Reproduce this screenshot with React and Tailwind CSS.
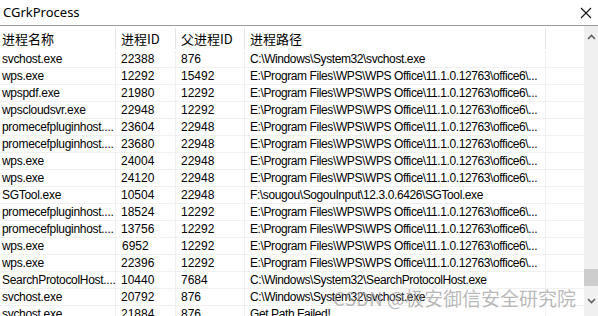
import React from 'react';

const rows = [
  ['svchost.exe', '22388', '876', 'C:\\Windows\\System32\\svchost.exe'],
  ['wps.exe', '12292', '15492', 'E:\\Program Files\\WPS\\WPS Office\\11.1.0.12763\\office6\\...'],
  ['wpspdf.exe', '21980', '12292', 'E:\\Program Files\\WPS\\WPS Office\\11.1.0.12763\\office6\\...'],
  ['wpscloudsvr.exe', '22948', '12292', 'E:\\Program Files\\WPS\\WPS Office\\11.1.0.12763\\office6\\...'],
  ['promecefpluginhost....', '23604', '22948', 'E:\\Program Files\\WPS\\WPS Office\\11.1.0.12763\\office6\\...'],
  ['promecefpluginhost....', '23680', '22948', 'E:\\Program Files\\WPS\\WPS Office\\11.1.0.12763\\office6\\...'],
  ['wps.exe', '24004', '22948', 'E:\\Program Files\\WPS\\WPS Office\\11.1.0.12763\\office6\\...'],
  ['wps.exe', '24120', '22948', 'E:\\Program Files\\WPS\\WPS Office\\11.1.0.12763\\office6\\...'],
  ['SGTool.exe', '10504', '22948', 'F:\\sougou\\SogouInput\\12.3.0.6426\\SGTool.exe'],
  ['promecefpluginhost....', '18524', '12292', 'E:\\Program Files\\WPS\\WPS Office\\11.1.0.12763\\office6\\...'],
  ['promecefpluginhost....', '13756', '12292', 'E:\\Program Files\\WPS\\WPS Office\\11.1.0.12763\\office6\\...'],
  ['wps.exe', '6952', '12292', 'E:\\Program Files\\WPS\\WPS Office\\11.1.0.12763\\office6\\...'],
  ['wps.exe', '22396', '12292', 'E:\\Program Files\\WPS\\WPS Office\\11.1.0.12763\\office6\\...'],
  ['SearchProtocolHost....', '10440', '7684', 'C:\\Windows\\System32\\SearchProtocolHost.exe'],
  ['svchost.exe', '20792', '876', 'C:\\Windows\\System32\\svchost.exe'],
  ['svchost.exe', '21884', '876', 'Get Path Failed!'],
];

const cols = 'grid grid-cols-[116px_60px_69px_301px_38px]';

export default function App() {
  return (
    <div className="relative w-[598px] h-[316px] overflow-hidden bg-white text-black font-['Liberation_Sans','Noto_Sans_CJK_SC',sans-serif]">
      {/* title bar */}
      <div className="h-[26px] flex items-center justify-between pl-[3px] pr-[5px] border-b border-[#9a9a9a]">
        <span className="text-[13px] leading-none font-['Noto_Sans',sans-serif]">CGrkProcess</span>
        <svg width="12" height="12" viewBox="0 0 12 12" className="mr-[1px]">
          <path d="M1 1 L11 11 M11 1 L1 11" stroke="#111" strokeWidth="1.1" />
        </svg>
      </div>

      <div className="flex">
        <div className="w-[584px]">
          {/* header */}
          <div className={`${cols} h-[25px] text-[13px] font-['Noto_Sans_CJK_SC',sans-serif]`}>
            <div className="flex items-center pl-[2px] border-r border-[#e5e5e5] my-[2px]">进程名称</div>
            <div className="flex items-center pl-[5px] border-r border-[#e5e5e5] my-[2px]">进程ID</div>
            <div className="flex items-center pl-[5px] border-r border-[#e5e5e5] my-[2px]">父进程ID</div>
            <div className="flex items-center pl-[5px] border-r border-[#e5e5e5] my-[2px]">进程路径</div>
            <div />
          </div>
          {/* body */}
          {rows.map((r, i) => (
            <div key={i} className={`${cols} h-[17px] text-[12px] leading-[17px] border-b border-[#f0f0f0]`}>
              <div className="pl-[2px] border-r border-[#f0f0f0] whitespace-nowrap overflow-hidden tracking-[-0.3px]">{r[0]}</div>
              <div className={`${r[1].length === 4 ? 'pl-[6px]' : 'pl-[5px]'} border-r border-[#f0f0f0]`}>{r[1]}</div>
              <div className="pl-[5px] border-r border-[#f0f0f0]">{r[2]}</div>
              <div className="pl-[5px] border-r border-[#f0f0f0] whitespace-nowrap overflow-hidden tracking-[-0.4px]">{r[3]}</div>
              <div />
            </div>
          ))}
        </div>

        {/* scrollbar */}
        <div className="w-[14px] h-[290px] bg-[#f0f0f0] flex flex-col items-center">
          <svg width="9" height="6" viewBox="0 0 9 6" className="mt-[8px]">
            <path d="M1 5 L4.5 1.5 L8 5" stroke="#606060" strokeWidth="1.6" fill="none" />
          </svg>
          <div className="mt-[229px] w-full h-[17px] bg-[#cdcdcd]" />
          <svg width="9" height="6" viewBox="0 0 9 6" className="mt-[12px]">
            <path d="M1 1 L4.5 4.5 L8 1" stroke="#606060" strokeWidth="1.6" fill="none" />
          </svg>
        </div>
      </div>

      {/* watermark */}
      <div className="absolute left-[333px] top-[288px] text-[19px] leading-none text-[#9a9a9a]/70 whitespace-nowrap pointer-events-none font-['Noto_Sans_CJK_SC',sans-serif]">
        CSDN @极安御信安全研究院
      </div>
    </div>
  );
}
